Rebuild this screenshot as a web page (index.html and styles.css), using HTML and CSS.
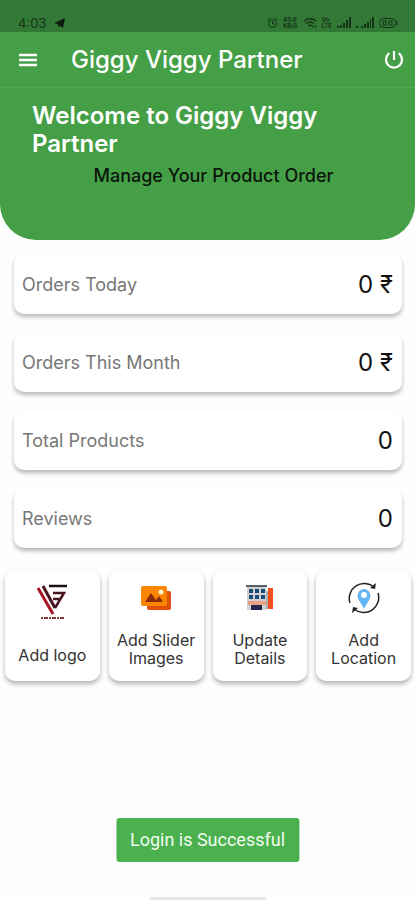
FILE: index.html
```
<!DOCTYPE html>
<html lang="en">
<head>
    <meta charset="UTF-8">
    <meta name="viewport" content="width=device-width, initial-scale=1.0">
    <title>Giggy Viggy Partner</title>
    <link rel="stylesheet" href="styles.css">
</head>
<body>

    <div class="status-bar">
        <span class="time">4:03</span>
        <svg class="send" width="11" height="10" viewBox="0 0 11 10"><path d="M0 5 11 0 9 10 6 8 4 9 4 6z"/></svg>
        <div class="status-icons">
            <svg width="11" height="12" viewBox="0 0 11 12" fill="none" stroke="currentColor"><circle cx="5.5" cy="6.5" r="4"/><path d="M5.5 4v3h2M0.5 3 3 1M10.5 3 8 1"/></svg>
            <span class="speed">43.0<br>KB/S</span>
            <svg width="14" height="12" viewBox="0 0 14 12" fill="none" stroke="currentColor" stroke-width="1.4"><path d="M1 4q6-4.500 12 0M3 6.500q4-3 8 0M5 9q2-1.500 4 0"/><path d="M10 8v3M12.500 8v3" stroke-width="1"/></svg>
            <span class="speed">Vo<br>LTE</span>
            <svg width="14" height="11" viewBox="0 0 14 11"><path d="M0 9h2v2H0zM3 8h2v3H3zM6 6h2v5H6zM9 3h2v8H9zM12 0h2v11h-2z"/></svg>
            <svg width="18" height="11" viewBox="0 0 18 11"><path d="M0 9h2v2H0zM5 9h2v2H5zM8 7h2v4H8zM11 5h2v6h-2zM14 2h1v9h-1zM16 0h2v11h-2z"/></svg>
            <svg width="19" height="12" viewBox="0 0 19 12" fill="none" stroke="currentColor"><rect x=".5" y="1.500" width="16" height="9" rx="4"/><path d="M18 4v4M4 4h3v4H4zM10 4h3v4h-3z"/></svg>
        </div>
    </div>

    <header class="app-bar">
        <button type="button" class="icon-btn" aria-label="Menu">
            <svg width="20" height="14" viewBox="0 0 20 14" fill="none" stroke="#fff" stroke-width="2.500"><path d="M1 2h18M1 7h18M1 12h18"/></svg>
        </button>
        <h1>Giggy Viggy Partner</h1>
        <button type="button" class="icon-btn" aria-label="Log out">
            <svg width="20" height="20" viewBox="0 0 20 20" fill="none" stroke="#fff" stroke-width="2.200"><path d="M10 1v9M5.200 3.200a8 8 0 1 0 9.600 0"/></svg>
        </button>
    </header>

    <section class="welcome">
        <h2>Welcome to Giggy Viggy Partner</h2>
        <p>Manage Your Product Order</p>
    </section>

    <main>
        <div class="stats">
            <div class="stat"><span>Orders Today</span><strong>0 ₹</strong></div>
            <div class="stat"><span>Orders This Month</span><strong>0 ₹</strong></div>
            <div class="stat"><span>Total Products</span><strong>0</strong></div>
            <div class="stat"><span>Reviews</span><strong>0</strong></div>
        </div>

        <div class="actions">
            <button type="button" class="action">
                <svg class="logo-icon" width="34" height="36" viewBox="0 0 34 36" fill="none" stroke-width="3">
                    <path stroke="#a51625" d="M3 4 18 30"/>
                    <path stroke="#4a1420" d="M8 2 20 24"/>
                    <path stroke="#1c1014" stroke-width="2.500" d="M14 2h18"/>
                    <path stroke="#4a1420" stroke-width="2.500" d="M18 9h11L20 24M18 15h7"/>
                    <path stroke="#8a3a45" stroke-width="2" stroke-dasharray="2 1 4 1" d="M6 34h23"/>
                </svg>
                <span>Add logo</span>
            </button>
            <button type="button" class="action">
                <svg width="32" height="32" viewBox="0 0 32 32">
                    <rect x="7" y="9" width="24" height="19" rx="2" fill="#e2500b"/>
                    <rect x="1" y="4" width="26" height="20" rx="2" fill="#fb8500"/>
                    <path fill="#8c2b0c" d="M5 20 11 11l5 7 3-4 4 6z"/>
                    <circle cx="21" cy="10" r="2.500" fill="#fff3d0"/>
                </svg>
                <span>Add Slider Images</span>
            </button>
            <button type="button" class="action">
                <svg width="32" height="32" viewBox="0 0 32 32">
                    <path fill="#d3d0d3" d="M3 4h19v24H3z"/>
                    <path fill="#59616d" d="M2 3h21v2H2z"/>
                    <path fill="#174f78" d="M5 7h4v4H5zM11 7h4v4h-4zM17 7h4v4h-4zM5 13h4v4H5zM11 13h4v4h-4zM17 13h4v4h-4z"/>
                    <path fill="#e8a184" d="M4 19h18v4H4z"/>
                    <path fill="#20284f" d="M7 23h11v5H7z"/>
                    <path fill="#f4511e" d="M24 6h5v21h-5z"/>
                    <path fill="#a9b0b5" d="M22 9h2v18h-2z"/>
                </svg>
                <span>Update Details</span>
            </button>
            <button type="button" class="action">
                <svg width="32" height="32" viewBox="0 0 32 32">
                    <path fill="#64b5f6" d="M16 27C14 22 9.500 18 9.500 13.500a6.500 6.500 0 0 1 13 0C22.500 18 18 22 16 27z"/>
                    <circle cx="16" cy="13" r="3" fill="#fff"/>
                    <path fill="none" stroke="#222" stroke-width="1.500" d="M2 21A15 15 0 0 1 26 5M30 11A15 15 0 0 1 6 27"/>
                    <path fill="#222" d="m28 1-1 6-5-1zM4 31l1-6 5 1z"/>
                </svg>
                <span>Add Location</span>
            </button>
        </div>
    </main>

    <div class="toast" role="status">Login is Successful</div>
    <div class="home-bar"></div>

</body>
</html>
```
FILE: styles.css
```
* { box-sizing: border-box; }
body { margin: 0; min-height: 100vh; background-color: #fefefe; font-family: Inter, "Open Sans", sans-serif; }
button { font-family: inherit; border: none; cursor: pointer; }
h1, h2, p { margin: 0; }

.status-bar { display: flex; align-items: center; height: 32px; padding: 13px 17px 0 18px; background-color: #327936; color: #15331a; fill: #15331a; }
.time { font-size: 13px; }
.send { margin-left: 8px; fill: #0b1c0d; }
.status-icons { display: flex; align-items: center; gap: 5px; margin-left: auto; }
.speed { font-size: 6px; line-height: 6px; font-weight: bold; }

.app-bar { display: flex; align-items: center; height: 56px; padding: 0 11px 0 18px; background-color: #459f46; color: white; border-bottom: 1px solid #50a651; }
.app-bar h1 { flex: 1; margin-left: 33px; font-size: 24px; font-weight: 500; white-space: nowrap; }
.icon-btn { display: flex; padding: 0; background: none; }

.welcome { min-height: 152px; padding: 14px 32px; background-color: #459f46; border-radius: 0 0 36px 36px; }
.welcome h2 { color: white; font-size: 24px; line-height: 28px; font-weight: 600; }
.welcome p { margin-top: 7px; padding-left: 12px; color: #0b160b; font-size: 18px; line-height: 22px; font-weight: 500; text-align: center; }

.stats { display: grid; gap: 18px; padding: 14px 13px 0 14px; }
.stat { display: flex; align-items: center; justify-content: space-between; height: 60px; padding: 0 9px 0 8px; background: white; border-radius: 10px; box-shadow: 0 3px 4px rgba(0, 0, 0, 0.28); }
.stat span { color: #777; font-size: 18px; }
.stat strong { color: #111; font-size: 24px; font-weight: 400; }

.actions { display: grid; grid-template-columns: repeat(4, 1fr); gap: 9px; padding: 22px 4px 0 5px; }
.action { display: flex; flex-direction: column; align-items: center; justify-content: space-between; height: 111px; padding: 12px 4px 14px; background: white; border-radius: 10px; box-shadow: 0 3px 5px rgba(0, 0, 0, 0.3); color: #333; font-size: 16px; line-height: 18px; }
.action .logo-icon { margin-top: 2px; }
.action:first-child { padding-bottom: 17px; }

.toast { position: fixed; bottom: 38px; left: 50%; transform: translateX(-50%); padding: 12px 14px; background-color: #4bb14e; border-radius: 3px; color: #f1fbf0; font-family: Roboto, sans-serif; font-size: 18px; line-height: 20px; white-space: nowrap; }
.home-bar { position: fixed; bottom: 0; left: 50%; transform: translateX(-50%); width: 116px; height: 3px; background-color: #e8e8e8; }
```
